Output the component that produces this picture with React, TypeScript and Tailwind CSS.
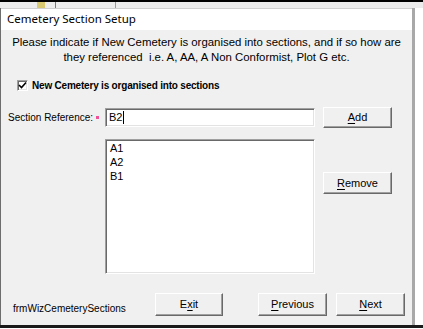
import React from 'react';

const ui = { fontFamily: '"Liberation Sans", Arial, sans-serif' };
const titleFont = { fontFamily: '"Noto Sans", "Open Sans", sans-serif' };

function Btn({ label, hot, className = '' }: { label: string; hot: number; className?: string }) {
  return (
    <div
      className={`flex items-center justify-center bg-[#f0f0f0] border border-t-white border-l-white border-r-[#696969] border-b-[#696969] shadow-[inset_-1px_-1px_0_#a0a0a0] text-[11px] text-black ${className}`}
    >
      <span>
        {label.slice(0, hot)}
        <span className="underline underline-offset-2">{label[hot]}</span>
        {label.slice(hot + 1)}
      </span>
    </div>
  );
}

const inset =
  'bg-white border border-t-[#a0a0a0] border-l-[#a0a0a0] border-r-white border-b-white shadow-[inset_1px_1px_0_#696969,inset_-1px_-1px_0_#e3e3e3]';

export default function App() {
  const sections = ['A1', 'A2', 'B1'];

  return (
    <div className="w-[423px] h-[329px] bg-white flex flex-col overflow-hidden" style={ui}>
      <div className="h-[2px] bg-black" />
      {/* bit of the window behind */}
      <div className="h-[6px] flex bg-[#ececec]">
        <div className="w-[37px]" />
        <div className="w-[8px] bg-[#d8c870]" />
        <div className="w-[10px]" />
        <div className="w-px bg-[#7a7a7a]" />
        <div className="w-[59px]" />
        <div className="w-px bg-[#9a9a9a]" />
      </div>

      <div className="flex-1 flex">
        <div className="w-[415px] flex flex-col border-l border-l-[#6d6d6d] border-r-[3px] border-r-[#a8a8a8]">
          <div className="h-[22px] bg-white border-t border-t-[#d0d0d0] flex items-center pl-[6px] pb-[2px] text-[11.5px] text-black" style={titleFont}>
            Cemetery Section Setup
          </div>

          <div className="flex-1 bg-[#f0f0f0] flex flex-col text-black">
            <p className="pt-[5px] text-center text-[11.4px] leading-[15px]">
              Please indicate if New Cemetery is organised into sections, and if so how are
              <br />
              they referenced&nbsp; i.e. A, AA, A Non Conformist, Plot G etc.
            </p>

            <div className="mt-[14px] ml-[16px] flex items-center gap-[4px] h-[13px]">
              <div className={`w-[11px] h-[11px] flex items-center justify-center ${inset}`}>
                <svg width="9" height="9" viewBox="0 0 9 9">
                  <path d="M1 4 L3.5 6.5 L8 1.5" fill="none" stroke="#000" strokeWidth="1.6" />
                </svg>
              </div>
              <span className="text-[10px] font-bold tracking-[-0.2px]">New Cemetery is organised into sections</span>
            </div>

            <div className="mt-[15px] grid grid-cols-[96px_210px_69px] gap-x-[8px]">
              <div className="flex items-center pl-[7px] whitespace-nowrap text-[10px]">
                <span className="shrink-0">Section Reference:</span>
                <span className="shrink-0 ml-[3px] w-[3px] h-[3px] bg-[#f0509a]" />
              </div>
              <div className={`mt-[1px] h-[19px] flex items-center pl-[3px] text-[11px] ${inset}`}>
                B2<span className="ml-px w-px h-[13px] bg-black" />
              </div>
              <Btn label="Add" hot={0} className="h-[21px]" />

              <div />
              <div className={`mt-[11px] h-[135px] pl-[4px] pt-[1px] text-[11px] leading-[14px] ${inset}`}>
                {sections.map((s) => (
                  <div key={s}>{s}</div>
                ))}
              </div>
              <div className="mt-[44px]">
                <Btn label="Remove" hot={0} className="h-[22px]" />
              </div>
            </div>

            <div className="mt-[19px] flex items-center">
              <span className="w-[154px] pl-[12px] pt-[8px] text-[10px]">frmWizCemeterySections</span>
              <Btn label="Exit" hot={1} className="w-[68px] h-[23px]" />
              <Btn label="Previous" hot={0} className="ml-[35px] w-[69px] h-[23px]" />
              <Btn label="Next" hot={0} className="ml-[9px] w-[69px] h-[23px]" />
            </div>
          </div>
        </div>
        <div className="flex-1 bg-white" />
      </div>

      <div className="h-[3px] bg-[#1a1a1a]" />
      <div className="h-px bg-white" />
    </div>
  );
}
